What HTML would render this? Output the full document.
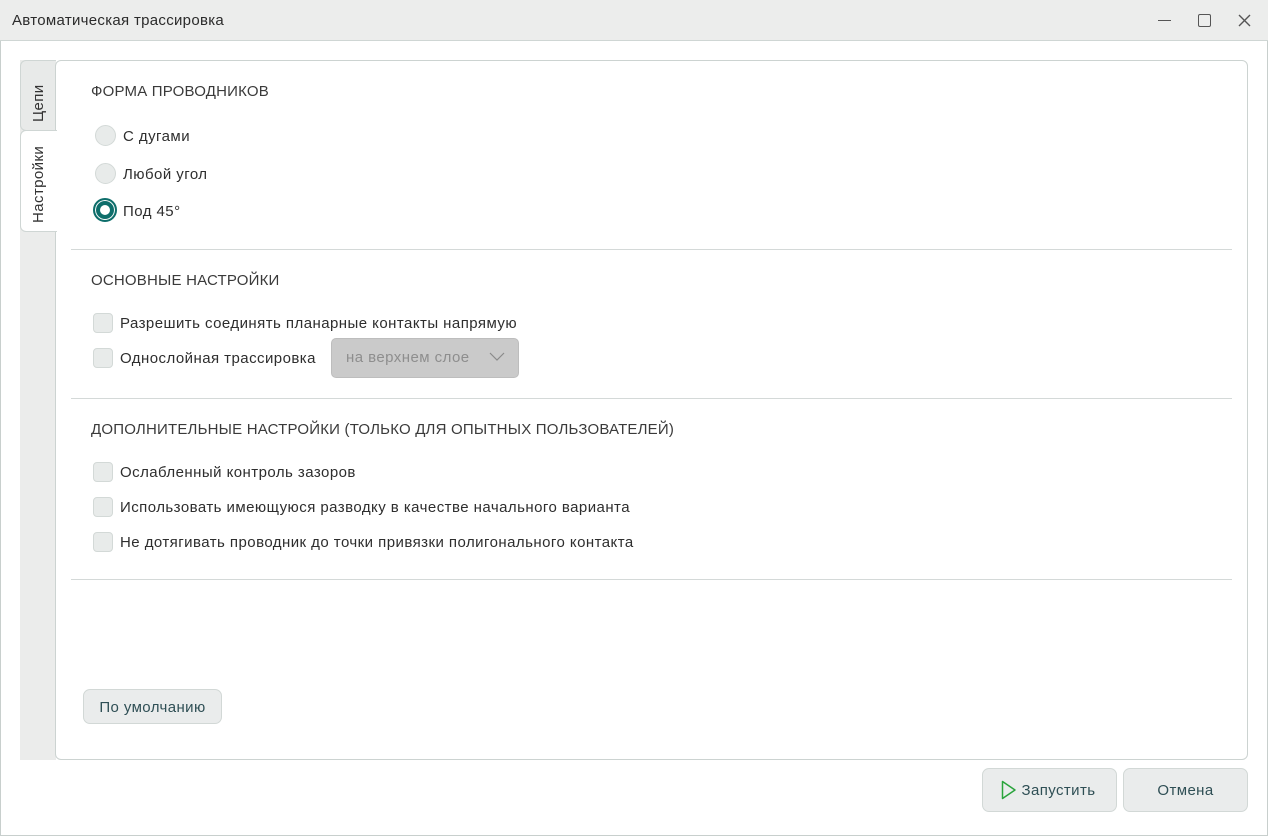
<!DOCTYPE html>
<html><head><meta charset="utf-8"><style>
*{box-sizing:border-box;margin:0;padding:0}
body{width:1268px;height:836px;background:#fff;font-family:"Liberation Sans",sans-serif;color:#333;font-size:14.5px;position:relative;overflow:hidden}
.win{position:absolute;left:0;top:0;width:1268px;height:836px;border:1px solid #c8cfcd}
.title{position:absolute;left:0;top:0;width:1268px;height:41px;background:#ecedec;border-bottom:1px solid #cfd6d4}
.title span{position:absolute;left:12px;top:12px;font-size:15px;color:#2b2b2b;letter-spacing:.3px}
.abs{position:absolute}
.strip{position:absolute;left:20px;top:60px;width:36px;height:700px;background:#ebeceb}
.panel{position:absolute;left:55px;top:60px;width:1193px;height:700px;border:1px solid #ccd3d1;border-radius:6px;background:#fff}
.tab{position:absolute;left:20px;width:36px;border:1px solid #cfd6d4;border-right:none;border-radius:6px 0 0 6px}
.vt{position:absolute;transform:rotate(-90deg);transform-origin:left top;white-space:nowrap;font-size:15px;letter-spacing:.4px}
.h{position:absolute;left:91px;font-size:15px;color:#3a3a3a;letter-spacing:.2px}
.hr{position:absolute;left:71px;width:1161px;height:1px;background:#d4d9d8}
.rad{position:absolute;left:95px;width:21px;height:21px;border-radius:50%;background:#e8ebea;border:1px solid #d3d9d7}
.cb{position:absolute;left:93px;width:20px;height:20px;border-radius:4px;background:#e8ebea;border:1px solid #d3d9d7}
.lbl{position:absolute;font-size:15px;color:#2e2e2e;letter-spacing:.45px}
.btn{position:absolute;background:#eaecec;border:1px solid #d2d8d6;border-radius:7px;font-size:15px;color:#2f4f55;text-align:center;letter-spacing:.4px}
</style></head><body>
<div class="win"></div>
<div class="title"><span>Автоматическая трассировка</span>
<div class="abs" style="left:1158px;top:20px;width:13px;height:1px;background:#555"></div>
<div class="abs" style="left:1198px;top:14px;width:13px;height:13px;border:1.5px solid #555;border-radius:2px"></div>
<svg class="abs" style="left:1238px;top:14px" width="13" height="13"><path d="M1 1L12 12M12 1L1 12" stroke="#555" stroke-width="1.4"/></svg>
</div>
<div class="strip"></div>
<div class="tab" style="top:60px;height:71px;background:#e8eae9"></div>
<div class="vt" style="left:30px;top:122px">Цепи</div>
<div class="panel"></div>
<div class="tab" style="top:130px;height:102px;background:#fff;width:37px"></div>
<div class="vt" style="left:30px;top:223px">Настройки</div>

<div class="h" style="top:83px">ФОРМА ПРОВОДНИКОВ</div>
<div class="rad" style="top:125px"></div><div class="lbl" style="left:123px;top:128px">С дугами</div>
<div class="rad" style="top:163px"></div><div class="lbl" style="left:123px;top:166px">Любой угол</div>
<div class="abs" style="left:93px;top:198px;width:24px;height:24px;border-radius:50%;background:#0e6e6b;border:2px solid #0e6e6b;box-shadow:inset 0 0 0 1px #fff"></div>
<div class="abs" style="left:100px;top:205px;width:10px;height:10px;border-radius:50%;background:#fff"></div>
<div class="lbl" style="left:123px;top:203px">Под 45°</div>
<div class="hr" style="top:249px"></div>

<div class="h" style="top:272px">ОСНОВНЫЕ НАСТРОЙКИ</div>
<div class="cb" style="top:313px"></div><div class="lbl" style="left:120px;top:315px">Разрешить соединять планарные контакты напрямую</div>
<div class="cb" style="top:348px"></div><div class="lbl" style="left:120px;top:350px">Однослойная трассировка</div>
<div class="abs" style="left:331px;top:338px;width:188px;height:40px;background:#cacaca;border:1px solid #bdbdbd;border-radius:5px"></div>
<div class="lbl" style="left:346px;top:349px;color:#8e8e8e">на верхнем слое</div>
<svg class="abs" style="left:489px;top:352px" width="16" height="10"><path d="M1 1L8 8L15 1" stroke="#8a8a8a" stroke-width="1.2" fill="none"/></svg>
<div class="hr" style="top:398px"></div>

<div class="h" style="top:421px">ДОПОЛНИТЕЛЬНЫЕ НАСТРОЙКИ (ТОЛЬКО ДЛЯ ОПЫТНЫХ ПОЛЬЗОВАТЕЛЕЙ)</div>
<div class="cb" style="top:462px"></div><div class="lbl" style="left:120px;top:464px">Ослабленный контроль зазоров</div>
<div class="cb" style="top:497px"></div><div class="lbl" style="left:120px;top:499px">Использовать имеющуюся разводку в качестве начального варианта</div>
<div class="cb" style="top:532px"></div><div class="lbl" style="left:120px;top:534px">Не дотягивать проводник до точки привязки полигонального контакта</div>
<div class="hr" style="top:579px"></div>

<div class="btn" style="left:83px;top:689px;width:139px;height:35px;line-height:35px">По умолчанию</div>
<div class="btn" style="left:982px;top:768px;width:135px;height:44px;line-height:44px;padding-left:18px">Запустить</div>
<svg class="abs" style="left:1001px;top:780px" width="16" height="20"><path d="M1.5 1.5L14 10L1.5 18.5Z" fill="none" stroke="#2aa43c" stroke-width="1.5" stroke-linejoin="round"/></svg>
<div class="btn" style="left:1123px;top:768px;width:125px;height:44px;line-height:44px">Отмена</div>
</body></html>
